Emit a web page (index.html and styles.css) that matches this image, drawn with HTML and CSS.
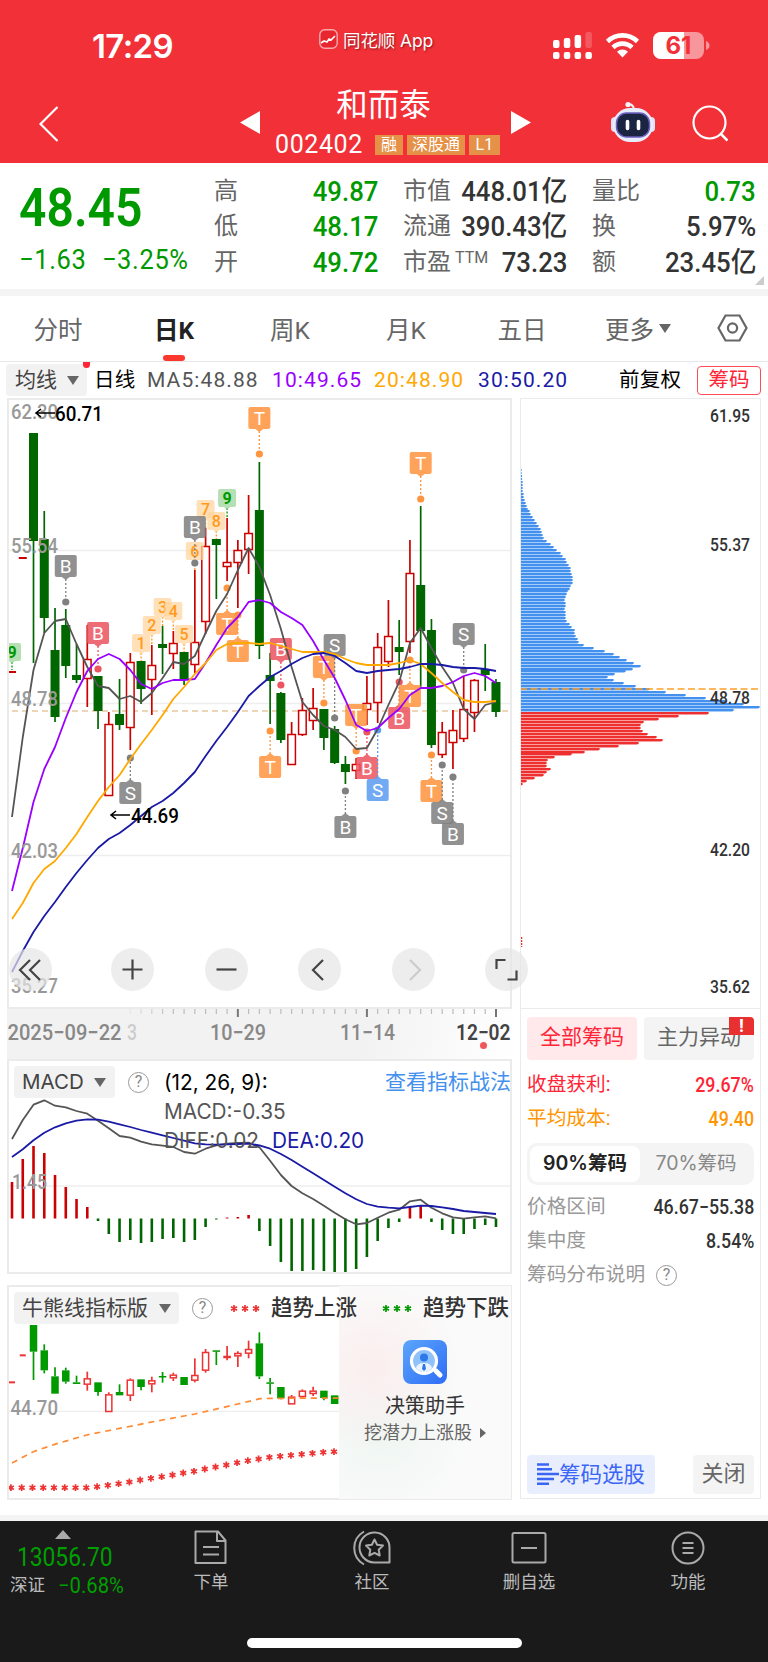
FILE: index.html
```html
<!DOCTYPE html>
<html lang="zh-CN">
<head>
  <meta charset="UTF-8">
  <meta name="viewport" content="width=device-width, initial-scale=1.0">
  <title>和而泰 002402</title>
  <link rel="stylesheet" href="styles.css">
</head>
<body>

  <header class="header">
    <div class="status">
      <span class="clock">17:29</span>
      <span class="app-name">
        <svg width="19" height="20" viewBox="0 0 19 20"><rect x=".8" y=".8" width="17.4" height="18.4" rx="5" fill="#e8262f" stroke="#f9a9ac" stroke-width="1.4"/><path d="M2 14l3-2 3 1 2-3 2 1 4-4" fill="none" stroke="#fff" stroke-width="1.6"/></svg>
        同花顺 App
      </span>
      <span class="status-icons">
        <svg width="39" height="27" viewBox="0 0 39 27" fill="#fff"><rect x="0" y="8" width="6.5" height="8" rx="2"/><rect x="10.8" y="6" width="6.5" height="10" rx="2"/><rect x="21.6" y="3" width="6.5" height="13" rx="2"/><rect x="32.4" y="0" width="6.5" height="16" rx="2" opacity=".2"/><rect x="0" y="20" width="6.5" height="7" rx="2"/><rect x="10.8" y="20" width="6.5" height="7" rx="2"/><rect x="21.6" y="20" width="6.5" height="7" rx="2"/><rect x="32.4" y="20" width="6.5" height="7" rx="2"/></svg>
        <svg width="35" height="27" viewBox="0 0 35 27"><path d="M2.5 9.500a21.500 21.500 0 0 1 30 0M8 15.500a13.500 13.500 0 0 1 19 0" fill="none" stroke="#fff" stroke-width="4.600"/><path d="M17.500 25.500l-5.500-5.800a8 8 0 0 1 11 0z" fill="#fff"/></svg>
        <svg width="57" height="27" viewBox="0 0 57 27"><rect width="51" height="27" rx="8" fill="#f8979b"/><path d="M8 0h23v27H8a8 8 0 0 1-8-8V8a8 8 0 0 1 8-8z" fill="#fff"/><path d="M53 9q3.500 1.500 3.500 4.500T53 18z" fill="#f8979b"/><text x="25.500" y="22" text-anchor="middle" class="battery">61</text></svg>
      </span>
    </div>
    <div class="title-bar">
      <svg class="back" width="20" height="36" viewBox="0 0 20 36"><path d="M18.500 1L1.500 18l17 17" fill="none" stroke="#fff" stroke-width="2.200"/></svg>
      <svg class="prev" width="20" height="23" viewBox="0 0 20 23"><path d="M20 0v23L0 11.500z" fill="#fff"/></svg>
      <div class="stock">
        <h1>和而泰</h1>
        <div class="code"><span>002402</span><i>融</i><i>深股通</i><i>L1</i></div>
      </div>
      <svg class="next" width="20" height="23" viewBox="0 0 20 23"><path d="M0 0v23l20-11.500z" fill="#fff"/></svg>
      <svg class="robot" width="44" height="42" viewBox="0 0 44 42"><path d="M23 9q0-5-5-6" fill="none" stroke="#eee" stroke-width="2"/><circle cx="17" cy="3.500" r="2.600" fill="#f4f4fa"/><rect x="0" y="16" width="8" height="15" rx="4" fill="#dfe2f6"/><rect x="36" y="16" width="8" height="15" rx="4" fill="#dfe2f6"/><rect x="2" y="7" width="40" height="34" rx="17" fill="#e9ecfb"/><rect x="5.500" y="12" width="33" height="24" rx="10" fill="#1b2440" stroke="#6b5fc0" stroke-width="1.500"/><path d="M16.500 20.500v7M27.500 20.500v7" stroke="#fff" stroke-width="3.600" stroke-linecap="round"/></svg>
      <svg class="search" width="36" height="37" viewBox="0 0 36 37"><circle cx="17.500" cy="17.500" r="16" fill="none" stroke="#fff" stroke-width="2.200"/><path d="M28.500 28.500l7 7" stroke="#fff" stroke-width="2.600"/></svg>
    </div>
  </header>

  <section class="quote">
    <div class="price">
      <strong>48.45</strong>
      <p><span>−1.63</span><span>−3.25%</span></p>
    </div>
    <dl>
      <div><dt>高</dt><dd class="green">49.87</dd></div>
      <div><dt>市值</dt><dd>448.01亿</dd></div>
      <div><dt>量比</dt><dd class="green">0.73</dd></div>
      <div><dt>低</dt><dd class="green">48.17</dd></div>
      <div><dt>流通</dt><dd>390.43亿</dd></div>
      <div><dt>换</dt><dd>5.97%</dd></div>
      <div><dt>开</dt><dd class="green">49.72</dd></div>
      <div><dt>市盈<sup>TTM</sup></dt><dd>73.23</dd></div>
      <div><dt>额</dt><dd>23.45亿</dd></div>
    </dl>
    <i class="corner"></i>
  </section>

  <nav class="tabs">
    <a>分时</a>
    <a class="active">日K</a>
    <a>周K</a>
    <a>月K</a>
    <a>五日</a>
    <a>更多<i class="caret"></i></a>
    <a><svg width="31" height="28" viewBox="0 0 31 28" fill="none" stroke="#666" stroke-width="2.200"><path d="M8.500 1.500h14l7 12.500-7 12.500h-14L1.500 14z"/><circle cx="15.500" cy="14" r="4.600"/></svg></a>
  </nav>

  <div class="ma-row">
    <span class="select"><b>均线</b><i class="caret"></i><em></em></span>
    <span class="black">日线</span>
    <span class="ma5">MA5:48.88</span>
    <span class="ma10">10:49.65</span>
    <span class="ma20">20:48.90</span>
    <span class="ma30">30:50.20</span>
    <span class="black">前复权</span>
    <span class="chip-btn">筹码</span>
  </div>

  <main class="board">
    <div class="charts">
      <div class="k-box">
        <svg id="kline" width="505" height="611" viewBox="7 398 505 611"></svg>
        <div class="controls">
          <button><svg viewBox="0 0 43 43"><path d="M21 12L11 22l10 10M31 12L21 22l10 10"/></svg></button>
          <button><svg viewBox="0 0 43 43"><path d="M21.500 11.500v20M11.500 21.500h20"/></svg></button>
          <button><svg viewBox="0 0 43 43"><path d="M11.500 21.500h20"/></svg></button>
          <button><svg viewBox="0 0 43 43"><path d="M25 12L15 22l10 10"/></svg></button>
          <button class="off"><svg viewBox="0 0 43 43"><path d="M18 12l10 10-10 10"/></svg></button>
          <button><svg viewBox="0 0 43 43"><path d="M20.500 12h-9v9M31.500 22.500v9h-9"/></svg></button>
        </div>
      </div>
      <svg id="dates" class="dates" width="505" height="50" viewBox="7 1009 505 50"></svg>

      <div class="macd-box">
        <svg id="macd" width="505" height="215" viewBox="7 1059 505 215"></svg>
        <div class="ind-head">
          <span class="select">MACD<i class="caret"></i></span>
          <span class="help">?</span>
          <div class="macd-text">
            <p class="black">(12, 26, 9):</p>
            <p>MACD:-0.35</p>
            <p>DIFF:0.02<span class="dea">DEA:0.20</span></p>
          </div>
          <a class="link">查看指标战法</a>
        </div>
      </div>

      <div class="bull-box">
        <svg id="bull" width="505" height="215" viewBox="7 1285 505 215"></svg>
        <div class="promo">
          <svg width="44" height="44" viewBox="0 0 44 44"><defs><linearGradient id="pg" x2="1" y2="1"><stop stop-color="#5ba6fb"/><stop offset="1" stop-color="#2f6cf6"/></linearGradient></defs><rect width="44" height="44" rx="8" fill="url(#pg)"/><path d="M33 31l4 4" stroke="#fff" stroke-width="5" stroke-linecap="round"/><circle cx="21" cy="21" r="12.500" fill="#8fc1fb" stroke="#fff" stroke-width="3.200"/><circle cx="21" cy="17.500" r="4" fill="#2d78e8"/><path d="M13 28q1-5 8-5t8 5q-3 4-8 4t-8-4z" fill="#e8f3ff"/><path d="M20 24h2l1 5-2 2-2-2z" fill="#2d78e8"/></svg>
          <strong>决策助手</strong>
          <p>挖潜力上涨股<i></i></p>
        </div>
        <div class="ind-head">
          <span class="select">牛熊线指标版<i class="caret"></i></span>
          <span class="help">?</span>
          <span class="stars red" data-color="#ee3333"></span>
          <span class="trend up">趋势上涨</span>
          <span class="stars" data-color="#009900"></span>
          <span class="trend">趋势下跌</span>
        </div>
      </div>
    </div>

    <aside class="chips">
      <svg id="chipChart" width="241" height="611" viewBox="520 398 241 611"></svg>
      <div class="chip-info">
        <div class="chip-tabs">
          <span class="on">全部筹码</span>
          <span>主力异动<i>!</i></span>
        </div>
        <div class="row red"><span>收盘获利:</span><b>29.67%</b></div>
        <div class="row orange"><span>平均成本:</span><b>49.40</b></div>
        <div class="segment"><span class="on">90%筹码</span><span>70%筹码</span></div>
        <div class="row"><span>价格区间</span><b>46.67−55.38</b></div>
        <div class="row"><span>集中度</span><b>8.54%</b></div>
        <div class="row"><span>筹码分布说明</span><span class="help">?</span></div>
        <div class="chip-foot">
          <a class="pick"><svg width="22" height="23" viewBox="0 0 22 23"><path d="M0 1.500h12M0 6.300h15M0 11.100h22M0 15.900h17M0 20.700h12" stroke="#3b66f5" stroke-width="2.500"/></svg>筹码选股</a>
          <a class="close">关闭</a>
        </div>
      </div>
    </aside>
  </main>

  <footer class="bottom">
    <div class="index">
      <i></i>
      <strong>13056.70</strong>
      <p>深证<span>−0.68%</span></p>
    </div>
    <a class="n1"><svg width="36" height="36" viewBox="0 0 36 36"><path d="M5 1.500h20l7.500 9V33H2.500V1.500zM24 2v9h8M10 17h16M10 24.500h16"/></svg>下单</a>
    <a class="n2"><svg width="40" height="36" viewBox="0 0 40 36"><path d="M12 1.500C-1 9-1 27 12 34.500M37.500 18v14.500H22A15 15 0 1 1 37.500 18z"/><path d="M22.500 9.500l2.600 5.300 5.900.8-4.300 4.100 1 5.800-5.200-2.700-5.200 2.700 1-5.800-4.300-4.100 5.900-.8z"/></svg>社区</a>
    <a class="n3"><svg width="36" height="36" viewBox="0 0 36 36"><rect x="1.500" y="3" width="33" height="29.500" rx="1.500"/><path d="M10 18h16"/></svg>删自选</a>
    <a class="n4"><svg width="36" height="36" viewBox="0 0 36 36"><circle cx="18" cy="18" r="15.500"/><path d="M12.500 13h11M12.500 18h11M12.500 23h11"/></svg>功能</a>
    <div class="home"></div>
  </footer>

  <script src="script.js"></script>
</body>
</html>
```
FILE: styles.css
```css
* {
  box-sizing: border-box;
}
body {
  margin: 0;
  width: 768px;
  height: 1662px;
  overflow: hidden;
  background: #fff;
  color: #333;
  font-family: Roboto, "Noto Sans CJK SC", sans-serif;
}
h1, p, dl, dd, dt {
  margin: 0;
  font-weight: normal;
}
i, em {
  font-style: normal;
}
svg {
  display: block;
  flex: none;
}
.green { color: #009900; }
.black { color: #000; }
.caret {
  display: inline-block;
  border: 6px solid transparent;
  border-top: 9px solid #666;
  border-bottom: 0;
}

/* header */
.header {
  height: 163px;
  background: #f23038;
  color: #fff;
}
.status {
  display: flex;
  height: 89px;
  padding: 32px 58px 0 92px;
}
.clock {
  font: 600 33px/29px Inter, sans-serif;
  letter-spacing: -.6px;
  width: 227px;
}
.app-name {
  display: flex;
  align-items: center;
  gap: 5px;
  height: 20px;
  margin-top: -3px;
  font-family: Inter, "Noto Sans CJK SC", sans-serif;
  font-size: 17.5px;
  letter-spacing: -.1px;
  white-space: nowrap;
  text-shadow: 1px 1px 2px rgba(80, 0, 0, .6);
}
.status-icons {
  display: flex;
  gap: 13px;
  margin-left: auto;
}
.battery {
  font: 700 24px Inter, sans-serif;
  fill: #f23038;
}
.title-bar {
  display: flex;
  align-items: flex-start;
  height: 74px;
}
.back { margin: 17px 0 0 39px; }
.prev { margin: 22px 0 0 181px; }
.stock {
  width: 251px;
  padding-left: 15px;
}
.stock h1 {
  width: 217px;
  text-align: center;
  font-size: 31.5px;
  line-height: 32px;
  margin-top: 1px;
}
.code {
  display: flex;
  gap: 4px;
  margin-top: 13px;
}
.code span {
  font-size: 25px;
  line-height: 20px;
  letter-spacing: .6px;
  width: 96px;
}
.code i {
  height: 20px;
  padding: 0 5px;
  background: #e59147;
  font-size: 16px;
  line-height: 20px;
}
.code i:first-of-type { padding: 0 6px; }
.code i:last-of-type { padding: 0 6.500px; }
.next { margin-top: 22px; }
.robot { margin: 12px 0 0 80px; }
.search { margin: 16px 0 0 37px; }

/* quote */
.quote {
  position: relative;
  display: flex;
  height: 133px;
  padding: 11px 12px 0 19px;
  border-bottom: 7px solid #f4f4f4;
}
.price {
  width: 195px;
  color: #009900;
}
.price strong {
  display: block;
  font-size: 54px;
  line-height: 64px;
  height: 68px;
  font-weight: 600;
  transform: scaleX(.89);
  transform-origin: left;
  padding-top: 2px;
}
.price p {
  display: flex;
  gap: 17px;
  font-size: 28px;
  line-height: 36px;
  letter-spacing: .7px;
  transform: scaleX(.91);
  transform-origin: left;
}
.quote dl {
  display: grid;
  grid-template-columns: 164px 164px 164px;
  gap: 0 25px;
  grid-auto-rows: 35.300px;
}
.quote dl div {
  display: flex;
  justify-content: space-between;
  line-height: 35px;
  white-space: nowrap;
}
.quote dt {
  font-size: 24px;
  color: #666;
}
.quote dt sup {
  font-size: 16px;
  line-height: 1;
  vertical-align: 7px;
  margin-left: 4px;
}
.quote dd {
  font-size: 28px;
  font-weight: 500;
  transform: scaleX(.92);
  transform-origin: right;
}
.corner {
  position: absolute;
  right: 4px;
  bottom: 4px;
  border-left: 9px solid transparent;
  border-bottom: 9px solid #ccc;
}

/* period tabs */
.tabs {
  display: grid;
  grid-template-columns: repeat(6, 116px) 72px;
  height: 66px;
  border-bottom: 1px solid #e8e8e8;
}
.tabs a {
  display: flex;
  align-items: center;
  justify-content: center;
  gap: 5px;
  padding-bottom: 1px;
  font-size: 24.500px;
  color: #666;
}
.tabs .active {
  position: relative;
  color: #222;
  font-weight: 700;
}
.tabs .active::after {
  content: "";
  position: absolute;
  left: 47px;
  bottom: 0;
  width: 22px;
  height: 6px;
  border-radius: 3px;
  background: #fb382d;
}

/* moving averages */
.ma-row {
  display: grid;
  grid-template-columns: 88px 53px 125px 102px 104px 141px 78px 64px;
  height: 36px;
  padding: 2px 0 0 6px;
  font-size: 21px;
  line-height: 32px;
  letter-spacing: 1.100px;
  white-space: nowrap;
}
.select {
  position: relative;
  display: flex;
  align-items: center;
  justify-content: space-between;
  height: 32px;
  border-radius: 4px;
  background: #f2f2f2;
  color: #444;
}
.ma-row .select {
  width: 81px;
  padding: 0 8px 0 9px;
  letter-spacing: 0;
}
.ma-row .select b { font-weight: 400; }
.select em {
  position: absolute;
  right: -3px;
  top: -2px;
  width: 7px;
  height: 6px;
  border-radius: 0 0 4px 4px;
  background: #ff2436;
}
.ma-row .black { font-size: 20.500px; letter-spacing: .3px; }
.ma5 { color: #555; }
.ma10 { color: #9900ff; }
.ma20 { color: #ffa800; }
.ma30 { color: #1a1aa6; }
.chip-btn {
  height: 29px;
  margin-top: 2px;
  border: 1.500px solid #ff4c5b;
  border-radius: 4px;
  color: #ff2436;
  font-size: 20.500px;
  line-height: 26px;
  letter-spacing: 0;
  text-align: center;
}

/* board */
.board {
  display: flex;
  gap: 8px;
  height: 1123px;
  padding-left: 7px;
  border-bottom: 6px solid #f4f4f4;
}
.charts { width: 505px; }
.k-box, .macd-box, .bull-box { position: relative; }
.k-box > svg, .macd-box > svg, .bull-box > svg, #chipChart {
  outline: 2px solid #ebebeb;
  outline-offset: -2px;
}
.bull-box { margin-top: 11px; }
svg text { font-family: Roboto, sans-serif; }
.axis { font-size: 20.500px; fill: #999; font-weight: 500; }
.peak { font-size: 21px; font-weight: 500; }
.chip-axis { font-size: 18px; fill: #333; font-weight: 500; }
.date { font-size: 22px; fill: #888; font-weight: 500; }
.date.last { fill: #444; font-weight: 600; }
.controls {
  position: absolute;
  z-index: 2;
  left: 2px;
  bottom: 18px;
  width: 519px;
  display: flex;
  justify-content: space-between;
}
.controls button {
  width: 43px;
  height: 43px;
  padding: 0;
  border: 0;
  border-radius: 50%;
  background: rgba(229, 229, 229, .7);
}
.controls button:first-child { margin-right: 9px; }
.controls path {
  fill: none;
  stroke: #444;
  stroke-width: 2.200;
}
.controls .off path { stroke: #ccc; }
.dates { background: linear-gradient(100deg, #f2f2f2 70%, #fff); }

/* indicator headers */
.ind-head {
  position: absolute;
  left: 7px;
  top: 7px;
  width: 497px;
  display: flex;
  font-size: 21px;
  line-height: 32px;
  white-space: nowrap;
}
.ind-head .select {
  width: 101px;
  padding: 0 9px 0 8px;
  font-family: Inter, "Noto Sans CJK SC", sans-serif;
  font-size: 20.500px;
}
.bull-box .select { width: 165px; font-size: 21px; padding-right: 8px; }
.help {
  width: 21px;
  height: 21px;
  margin: 6px 0 0 13px;
  border: 1.500px solid #999;
  border-radius: 50%;
  color: #888;
  font-size: 16px;
  line-height: 18px;
  text-align: center;
}
.macd-text {
  margin-left: 15px;
  font-family: Inter, sans-serif;
  font-size: 20.800px;
  line-height: 29px;
  color: #555;
}
.macd-text .black { line-height: 33px; height: 31px; }
.dea { color: #1a1aa6; margin-left: 13px; }
.link { margin-left: auto; color: #4390ee; }
.stars { margin: 12px 0 0 17px; }
.trend {
  margin-left: 11px;
  font-size: 21.500px;
  font-weight: 500;
}
.trend.up { margin-right: 8px; }
.promo {
  position: absolute;
  right: 1px;
  top: 1px;
  width: 172px;
  height: 213px;
  padding-top: 54px;
  display: flex;
  flex-direction: column;
  align-items: center;
  background: radial-gradient(circle at 20% 38%, #fbeeee, transparent 45%), radial-gradient(circle at 25% 68%, #eef6f2, transparent 45%), #fafafa;
}
.promo strong {
  margin-top: 7px;
  font-size: 20px;
  line-height: 30px;
  font-weight: 400;
}
.promo p {
  display: flex;
  align-items: center;
  gap: 8px;
  font-size: 18px;
  line-height: 24px;
  color: #666;
}
.promo p i {
  border: 5px solid transparent;
  border-left: 6px solid #666;
  border-right: 0;
}

/* chips */
.chips {
  width: 241px;
  height: 1101px;
  border: 1px solid #ebebeb;
}
#chipChart { margin: -1px; outline-width: 1px; outline-offset: -1px; }
.chip-info {
  display: flex;
  flex-direction: column;
  height: 489px;
  padding: 8px 6px 4px;
  margin-top: 1px;
}
.chip-tabs, .segment, .chip-foot {
  display: flex;
  justify-content: space-between;
}
.chip-tabs span {
  position: relative;
  width: 110px;
  height: 43px;
  border-radius: 4px;
  background: #f4f4f4;
  color: #666;
  font-size: 21px;
  line-height: 41px;
  text-align: center;
}
.chip-tabs .on { background: #ffe9ea; color: #ff2436; }
.chip-tabs i {
  position: absolute;
  right: 0;
  top: 0;
  width: 25px;
  height: 18px;
  border-radius: 0 4px 0 0;
  background: #e93030;
  color: #fff;
  font: 700 18px/18px Roboto, sans-serif;
}
.chip-tabs { margin-bottom: 8px; }
.row {
  display: flex;
  justify-content: space-between;
  font-size: 19.700px;
  line-height: 34.300px;
  height: 34.300px;
  color: #999;
}
.row b { color: #333; font-weight: 500; font-size: 20px; transform: scaleX(.89); transform-origin: right; }
.row.red, .row.red b { color: #ff2436; }
.row.orange, .row.orange b { color: #ff9500; }
.row .help { margin: 7px auto 0 11px; }
.segment {
  height: 42px;
  margin: 6px 0 5px;
  padding: 3px;
  border-radius: 10px;
  background: #f4f4f4;
  font-family: Inter, "Noto Sans CJK SC", sans-serif;
  font-size: 19.500px;
  line-height: 35px;
  color: #888;
}
.segment span { width: 110px; text-align: center; }
.segment .on {
  border-radius: 8px;
  background: #fff;
  color: #222;
  font-weight: 600;
}
.chip-foot { margin-top: auto; }
.chip-foot a {
  height: 39px;
  border-radius: 4px;
  background: #f4f4f4;
  color: #666;
  font-size: 22px;
  line-height: 37px;
  padding: 0 8.500px;
}
.chip-foot .pick {
  display: flex;
  align-items: center;
  background: #e9eeff;
  color: #3b66f5;
  font-size: 21.500px;
  padding: 0 10px;
}

/* bottom bar */
.bottom {
  position: relative;
  display: flex;
  height: 141px;
  background: #1a1a1a;
  color: #bbb;
}
.index {
  width: 129px;
  padding: 9px 0 0 10px;
}
.index i {
  display: block;
  width: 0;
  margin-left: 45px;
  border: 8px solid transparent;
  border-bottom: 9px solid #aaa;
  border-top: 0;
}
.index strong {
  display: block;
  margin: 5px 0 0 7px;
  font-size: 25px;
  line-height: 28px;
  font-weight: 400;
  color: #009f00;
  transform: scaleX(.91);
  transform-origin: left;
}
.index p {
  display: flex;
  font-size: 17.500px;
  line-height: 27px;
  white-space: nowrap;
}
.index span {
  margin-left: 13px;
  font-size: 22px;
  color: #009f00;
  transform: scaleX(.92);
  transform-origin: left;
}
.bottom a {
  width: 60px;
  padding-top: 9px;
  font-size: 17.500px;
  line-height: 32px;
  display: flex;
  flex-direction: column;
  align-items: center;
}
.bottom a svg {
  fill: none;
  stroke: #aaa;
  stroke-width: 2;
  stroke-linejoin: round;
}
.n1 { margin-left: 52px; }
.n2 { margin-left: 101px; }
.n3 { margin-left: 97px; }
.n4 { margin-left: 99px; }
.home {
  position: absolute;
  left: 247px;
  bottom: 14px;
  width: 275px;
  height: 10px;
  border-radius: 5px;
  background: #fff;
}
```
FILE: script.js
```js
const RED = '#cc0000', GREEN = '#006600';
const STEP = 10.755;
const cx = i => 12 + i * STEP;

// [up, high, top, bottom, low]
const candles = [
  [1,672,672,672,672],[1,558,558,558,558],[0,433,433,541,663],[0,511,539,618,633],[0,608,650,717,722],
  [0,609,625,666,678],[0,644,675,680,683],[1,625,659,679,707],[0,676,676,711,729],[1,712,724,796,796],
  [0,679,714,725,730],[1,653,662,728,750],[0,661,661,689,704],[1,645,665,680,715],[0,626,644,648,674],
  [1,631,643,654,669],[0,652,652,680,685],[1,570,642,665,673],[1,528,546,622,634],[0,539,539,545,599],
  [1,518,562,567,581],[1,540,550,563,608],[1,495,533,550,574],[0,462,510,646,659],[0,653,675,681,724],
  [0,692,693,740,743],[1,722,734,765,765],[1,698,710,735,736],[1,688,708,721,730],[0,709,709,738,750],
  [0,726,729,763,764],[0,756,764,772,784],[1,758,764,771,779],[1,676,703,710,725],[1,633,647,703,723],
  [1,600,636,662,667],[0,620,647,652,675],[1,540,573,642,653],[0,506,585,631,688],[0,619,630,745,748],
  [1,722,732,755,758],[1,710,730,743,769],[1,676,709,739,742],[1,679,680,713,732],[0,644,669,675,691],
  [0,679,682,712,717]
];

const ma5 = [817,737,670,633,621,619,644,667,686,688,699,696,702,693,678,662,664,656,633,611,594,570,548,567,595,629,667,702,715,726,730,737,749,748,729,705,682,643,628,648,667,683,709,719,705,702];
const ma10 = [891,848,802,769,747,718,692,671,659,654,659,670,684,689,683,680,680,679,663,645,628,617,602,600,603,612,618,625,641,660,678,700,725,731,728,718,709,695,688,688,686,682,676,673,676,683];
const ma20 = [919,903,883,869,861,848,834,817,801,787,775,759,744,730,715,699,687,674,663,650,644,643,643,644,643,646,649,652,652,652,654,659,663,665,665,665,663,660,664,673,683,692,700,702,702,701];
const ma30 = [972,951,932,916,902,887,873,860,848,839,833,825,816,807,801,793,783,772,756,741,727,712,696,686,677,671,664,658,654,653,656,663,671,673,671,670,669,667,664,664,665,667,668,668,669,671];

// [letter, colour, index, box y, dot y]
const marks = [
  ['B','grey',5,566,602],['B','red',8,633,669],['T','orange',23,418,454],['T','orange',38,463,499],
  ['B','grey',17,527,563],['T','orange',20,624,588],['T','orange',21,651,615],['B','red',25,649,685],
  ['T','orange',29,667,703],['S','grey',30,645,718],['S','grey',42,634,670],['S','grey',11,793,758],
  ['T','orange',24,767,731],['B','grey',31,827,791],['T','orange',32,715,751],['B','red',33,768,732],
  ['S','blue',34,790,730],['B','red',36,718,682],['T','orange',37,696,660],['T','orange',39,791,755],
  ['S','grey',40,813,765],['B','grey',41,834,777]
];
const markColors = { grey: '#808080', red: '#ec5560', orange: '#ff953f', blue: '#5a9df0' };

// [digit, index, box y, candle top]
const counts = [[9,0,652,670],[1,12,643,661],[2,13,625,645],[3,14,607,626],[4,15,611,631],[5,16,634,652],[6,17,551,570],[7,18,509,528],[8,19,521,539],[9,20,498,518]];

const line = (x1, y1, x2, y2, c, w = 1, extra = '') =>
  `<line x1="${x1}" y1="${y1}" x2="${x2}" y2="${y2}" stroke="${c}" stroke-width="${w}" ${extra}/>`;
const path = (ys, c, w = 1.8) =>
  `<polyline points="${ys.map((y, i) => cx(i).toFixed(1) + ',' + y.toFixed(1)).join(' ')}" fill="none" stroke="${c}" stroke-width="${w}" stroke-linejoin="round"/>`;
const label = (t, x, y, w, cls, extra = '') =>
  `<text x="${x}" y="${y}" textLength="${w}" lengthAdjust="spacingAndGlyphs" class="${cls}" ${extra}>${t}</text>`;

function candle(x, up, h, t, b, l, w, red, green) {
  const c = up ? red : green;
  if (h === l) return line(x - w / 2, h, x + w / 2, h, c, 2);
  let s = line(x, h, x, t, c, 1.7) + line(x, b, x, l, c, 1.7);
  if (up) s += `<rect x="${x - w / 2 + .7}" y="${t + .5}" width="${w - 1.4}" height="${Math.max(b - t - 1, 1)}" fill="#fff" stroke="${c}" stroke-width="1.5"/>`;
  else s += `<rect x="${x - w / 2}" y="${t}" width="${w}" height="${Math.max(b - t, 1.5)}" fill="${c}"/>`;
  return s;
}

function drawKline() {
  let s = [550.5, 703.5, 855.5].map(y => line(8, y, 511, y, '#eee', 1.3)).join('');
  s += line(12, 711, 511, 711, '#e6c9a0', 1.3, 'stroke-dasharray="6 4"');
  candles.forEach((k, i) => s += candle(cx(i), ...k, i < 2 ? 8 : 9, RED, GREEN));
  counts.forEach(([n, i, y, end]) => {
    const g = n === 9, x = cx(i), c = g ? '#009900' : '#ff9a1c';
    s += line(x, y + 10, x, end, c, 1.3, 'stroke-dasharray="2 1.500"');
    s += `<g><rect x="${x - 9}" y="${y - 9}" width="18" height="18" rx="2" fill="${g ? '#9bd69b' : '#ffd6a0'}" opacity=".75"/>
      <path d="M${x - 3} ${y + 9}h6l-3 3z" fill="${g ? '#9bd69b' : '#ffd6a0'}" opacity=".75"/>
      <text x="${x}" y="${y + 6}" font-size="16" text-anchor="middle" fill="${c}" font-weight="${g ? 700 : 500}">${n}</text></g>`;
  });
  marks.forEach(([t, name, i, y, dot]) => {
    const x = cx(i), c = markColors[name], dir = dot > y ? 1 : -1;
    s += line(x, y + 13 * dir, x, dot, c, 1.3, 'stroke-dasharray="2 2"');
    s += `<circle cx="${x}" cy="${dot}" r="3.600" fill="${c}"/>
      <g opacity=".86"><rect x="${x - 11}" y="${y - 11}" width="22" height="22" rx="2" fill="${c}"/><path d="M${x - 4} ${y + 11 * dir}h8l-4 ${3 * dir}z" fill="${c}"/></g>
      <text x="${x}" y="${y + 6.5}" font-size="19" text-anchor="middle" fill="#fff">${t}</text>`;
  });
  s += path(ma5, '#555') + path(ma10, '#9900ff') + path(ma20, '#ffa800') + path(ma30, '#1a1aa6');
  s += label('62.30', 11, 419, 47, 'axis') + label('55.54', 11, 553, 47, 'axis') + label('48.78', 11, 706, 47, 'axis') + label('42.03', 11, 858, 47, 'axis') + label('35.27', 11, 993, 47, 'axis');
  [[35, 413, '60.71', 55], [110, 815, '44.69', 131]].forEach(([x, y, t, tx]) => {
    s += `<path d="M${x + 20} ${y}H${x + 1}m5-4l-5 4 5 4" fill="none" stroke="#000" stroke-width="1.600"/>` + label(t, tx, y + 7.5, 48, 'peak');
  });
  document.getElementById('kline').innerHTML = s;
}

function drawDates() {
  let s = '';
  for (let i = 11; i < 46; i++) {
    const big = [21, 33, 45].includes(i);
    s += line(cx(i), 1009, cx(i), big ? 1017 : 1014, big ? '#777' : '#bbb', big ? 2 : 1.2, `opacity="${Math.min(1, (i - 10) / 5)}"`);
  }
  s += label('2025−09−22', 7.5, 1039.5, 114, 'date') + label('3', 127, 1039.5, 10, 'date', 'opacity=".35"');
  s += label('10−29', 210, 1039.5, 56, 'date') + label('11−14', 340, 1039.5, 55, 'date') + label('12−02', 456, 1039.5, 54.5, 'date last');
  s += '<circle cx="483.500" cy="1045.500" r="3.500" fill="#f0565c"/>';
  document.getElementById('dates').innerHTML = s;
}

function drawMacd() {
  const bars = [1182,1159,1146,1153,1175,1187,1199,1207,1221,1234,1242,1240,1243,1242,1239,1238,1242,1240,1227,1219.5,1217.5,1217,1215,1231,1246,1262,1271,1271,1270,1271,1272,1272,1269,1257,1241,1228,1222,1207,1206,1222,1230,1234,1234,1229,1225,1227];
  const diff = [297,240,194,181,197,202,213,221,242,265,288,293,305,313,317,321,336,341,326,316,311,309,308,322,362,405,438,460,477,497,518,538,553,549,533,518,509,484,479,503,520,532,536,532,529,535];
  const dea = [351,328,301,278,262,250,242,238,239,245,253,261,270,278,286,294,302,310,313,314,313,312,311,316,326,342,360,380,400,420,440,460,478,492,500,503,505,501,497,498,502,507,513,516,519,522];
  let s = line(8, 1186, 511, 1186, '#eee', 1.3);
  bars.forEach((y, i) => s += line(cx(i), 1218.5, cx(i), y, y < 1218.5 ? RED : GREEN, 2.6));
  s += path(diff.map(v => 1040 + v / 3), '#555') + path(dea.map(v => 1040 + v / 3), '#1a1aa6');
  s += label('1.45', 12, 1189, 35, 'axis');
  document.getElementById('macd').innerHTML = s;
}

const star = (x, y, c) => `<path d="M${x} ${y - 3.4}v6.800M${x - 3} ${y - 1.8}l6 3.600M${x - 3} ${y + 1.8}l6-3.600" stroke="${c}" stroke-width="1.700"/>`;

function drawBull() {
  const data = [[1,322,322,322,322],[1,241,241,241,241],[0,150,150,230,315],[0,208,226,286,295],[0,277,304,356,356],[0,278,286,320,326],[0,302,322,327,327],[1,290,310,329,347],[0,322,322,351,362],[1,352,358,411,411],[0,328,351,361,361],[1,310,314,362,378],[0,313,313,336,346],[1,305,316,328,352],[0,291,303,306,323],[1,293,299,310,318],[0,306,306,330,330],[1,250,300,317,322],[1,222,231,287,293],[0,226,226,230,270],[1,213,243,246,256],[1,229,234,244,276],[1,197,222,236,250],[0,172,205,304,312],[0,309,322,326,358],[0,336,336,370,373],[1,360,365,388,388],[1,343,347,366,368],[1,335,347,357,363],[0,347,347,369,376],[0,361,361,387,387]];
  const stars = [638,638,638,638,638,638,638,638,635,631,626,621,615,610,605,600,594,589,582,576,570,563,557,552,547,544,541,538,535,532,530];
  const trend = [[36,564],[100,530],[164,508],[260,480],[350,462],[470,438],[585,417],[680,395],[780,371],[820,370],[1020,369]];
  const y = v => 1275 + v / 3;
  let s = line(8, y(409), 511, y(409), '#eee', 1.3);
  data.forEach(([up, ...v], i) => s += candle(cx(i), up, ...v.map(y), i < 2 ? 6 : 7.500, '#ee3333', '#009900'));
  s += `<polyline points="${trend.map(p => p[0] / 3 + ',' + y(p[1])).join(' ')}" fill="none" stroke="#ff8a33" stroke-width="1.700" stroke-dasharray="6 5"/>`;
  stars.forEach((v, i) => s += star(10.9 + i * 10.77, y(v), '#ee3333'));
  s += label('44.70', 10.5, 1415, 47.5, 'axis');
  document.getElementById('bull').innerHTML = s;
}

function drawChips() {
  const blue = [213,239,223,205,185,165,145,129,115,103,93,87,94,105,112,120,113,106,99,93,84,73,63,58,57,55,54,54,51,49,46,45,45,45,44,45,45,44,45,46,47,49,50,52,52,52,51,50,50,48,46,45,42,40,36,33,30,26,23,22,21,20,18,16,14,12,10,9,7,6,5,4,3,3,2,2,2,2,1.5,1.5,1,1];
  const red = [188,158,138,123,120,120,122,127,136,142,118,98,79,64,51,34,27,26,26,30,26,23,14,6,2];
  const bar = (y, w, c, pale) =>
    `<rect x="520.600" y="${y}" width="${w}" height="2" fill="${c}"/><rect x="520.600" y="${y + 2}" width="${w - 1}" height="1" fill="${pale}"/>`;
  let s = '';
  for (let i = blue.length - 1; i >= 0; i--) s += bar(Math.round(709 - i * 2.963), blue[i], '#4390ee', '#a5cbf8');
  red.forEach((w, i) => s += bar(Math.round(712 + i * 2.963), w, '#ee2f2f', '#f89c9c'));
  s += line(520, 689, 760, 689, '#ffa02a', 1.6, 'stroke-dasharray="7 3.500"');
  s += line(521.5, 937, 521.5, 947, '#ee3333', 1.5, 'stroke-dasharray="2 1"');
  [['61.95', 421.5], ['55.37', 551], ['48.78', 704], ['42.20', 856], ['35.62', 992.5]].forEach(([t, y]) => s += label(t, 710, y, 40, 'chip-axis'));
  document.getElementById('chipChart').innerHTML = s;
}

document.querySelectorAll('.stars').forEach(el => {
  const c = el.dataset.color;
  el.innerHTML = `<svg width="30" height="9" viewBox="0 0 30 9">${star(4, 4.5, c) + star(15, 4.5, c) + star(26, 4.5, c)}</svg>`;
});

drawKline();
drawDates();
drawMacd();
drawBull();
drawChips();
```
